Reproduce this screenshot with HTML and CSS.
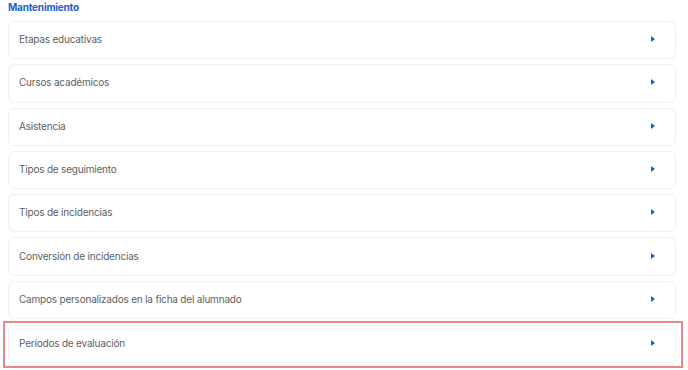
FILE: index.html
```html
<!DOCTYPE html>
<html lang="es">

<head>
    <meta charset="UTF-8">
    <meta name="viewport" content="width=device-width, initial-scale=1.0">
    <title>Mantenimiento</title>
    <link rel="stylesheet" href="styles.css">
</head>

<body>
    <div class="section">
        <h2 class="section-title">Mantenimiento</h2>
        <div class="menu">
            <div class="item"><span>Etapas educativas</span><span class="arrow"></span></div>
            <div class="item"><span>Cursos académicos</span><span class="arrow"></span></div>
            <div class="item"><span>Asistencia</span><span class="arrow"></span></div>
            <div class="item"><span>Tipos de seguimiento</span><span class="arrow"></span></div>
            <div class="item"><span>Tipos de incidencias</span><span class="arrow"></span></div>
            <div class="item"><span>Conversión de incidencias</span><span class="arrow"></span></div>
            <div class="item"><span>Campos personalizados en la ficha del alumnado</span><span class="arrow"></span></div>
            <div class="highlight">
                <div class="item"><span>Períodos de evaluación</span><span class="arrow"></span></div>
            </div>
        </div>
    </div>
</body>

</html>
```

FILE: styles.css
```css
body {
    font-family: 'Inter', sans-serif;
    margin: 0;
    background: #fff;
    color: #5a5f66;
}

.section {
    padding: 1px 12px 0 8px;
}

.section-title {
    font-size: 10px;
    font-weight: 700;
    letter-spacing: -0.2px;
    color: #1d5fcf;
    margin: 0 0 7px 0;
    line-height: 13px;
}

.menu {
    display: flex;
    flex-direction: column;
    gap: 5px;
}

.item {
    height: 38.3px;
    box-sizing: border-box;
    border: 1px solid #edf0f5;
    border-radius: 6px;
    display: flex;
    align-items: center;
    justify-content: space-between;
    padding: 0 20px 2px 10px;
    font-size: 10px;
    letter-spacing: -0.2px;
}

.arrow {
    width: 0;
    height: 0;
    border-top: 3px solid transparent;
    border-bottom: 3px solid transparent;
    border-left: 4px solid #1a5fd6;
}

.highlight {
    margin: -3px -7px 0 -5px;
    padding: 2px 5px 3px 3px;
    border: 2px solid #ef8585;
}
```
